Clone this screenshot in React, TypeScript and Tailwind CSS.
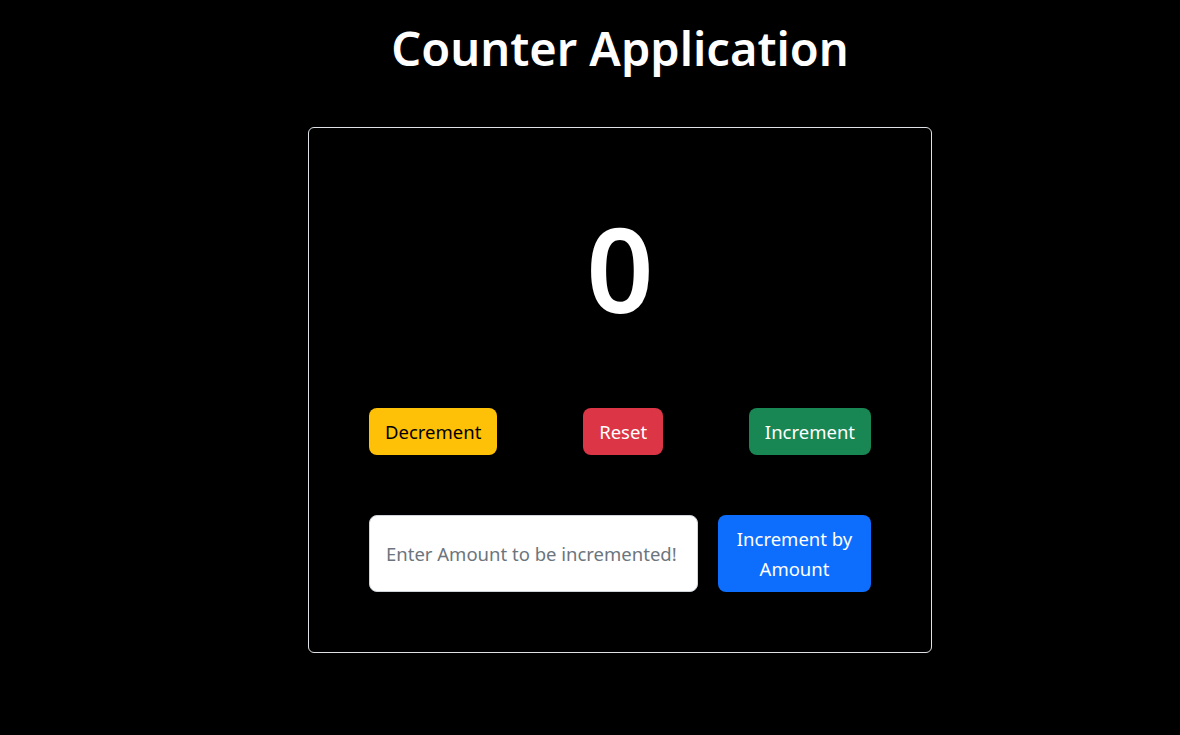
import { useState } from 'react'

export default function App() {
  const [count, setCount] = useState(0)
  const [amount, setAmount] = useState('')

  const font = { fontFamily: '"Noto Sans", "Open Sans", sans-serif' }

  return (
    <div className="min-h-[735px] w-full bg-black pl-[60px] text-white" style={font}>
      <div className="flex flex-col items-center">
        <h1 className="mt-[20px] text-[47px] leading-[1.2] font-semibold">Counter Application</h1>

        {/* Counter card */}
        <div className="mt-[51px] flex h-[526px] w-[624px] flex-col rounded-md border border-[#dee2e6] px-[60px] pt-[60px] pb-[60px]">
          <div className="flex h-[160px] items-center justify-center text-[118px] leading-none font-semibold">
            {count}
          </div>

          <div className="mt-[60px] flex items-center justify-between">
            <button
              onClick={() => setCount(count - 1)}
              className="rounded-lg bg-[#ffc107] px-4 py-2 text-[18.5px] leading-[31px] text-black"
            >
              Decrement
            </button>
            <button
              onClick={() => setCount(0)}
              className="rounded-lg bg-[#dc3545] px-4 py-2 text-[18.5px] leading-[31px] text-white"
            >
              Reset
            </button>
            <button
              onClick={() => setCount(count + 1)}
              className="rounded-lg bg-[#198754] px-4 py-2 text-[18.5px] leading-[31px] text-white"
            >
              Increment
            </button>
          </div>

          <div className="mt-[60px] flex items-stretch gap-5">
            <input
              value={amount}
              onChange={(e) => setAmount(e.target.value)}
              placeholder="Enter Amount to be incremented!"
              className="h-[77px] w-[329px] rounded-lg border border-[#ced4da] bg-white px-4 text-[18.5px] text-black placeholder:text-[#6c757d] outline-none"
            />
            <button
              onClick={() => setCount(count + (parseInt(amount) || 0))}
              className="h-[77px] flex-1 rounded-lg bg-[#0d6efd] px-4 text-[18.5px] leading-[30px] text-white"
            >
              Increment by Amount
            </button>
          </div>
        </div>
      </div>
    </div>
  )
}
